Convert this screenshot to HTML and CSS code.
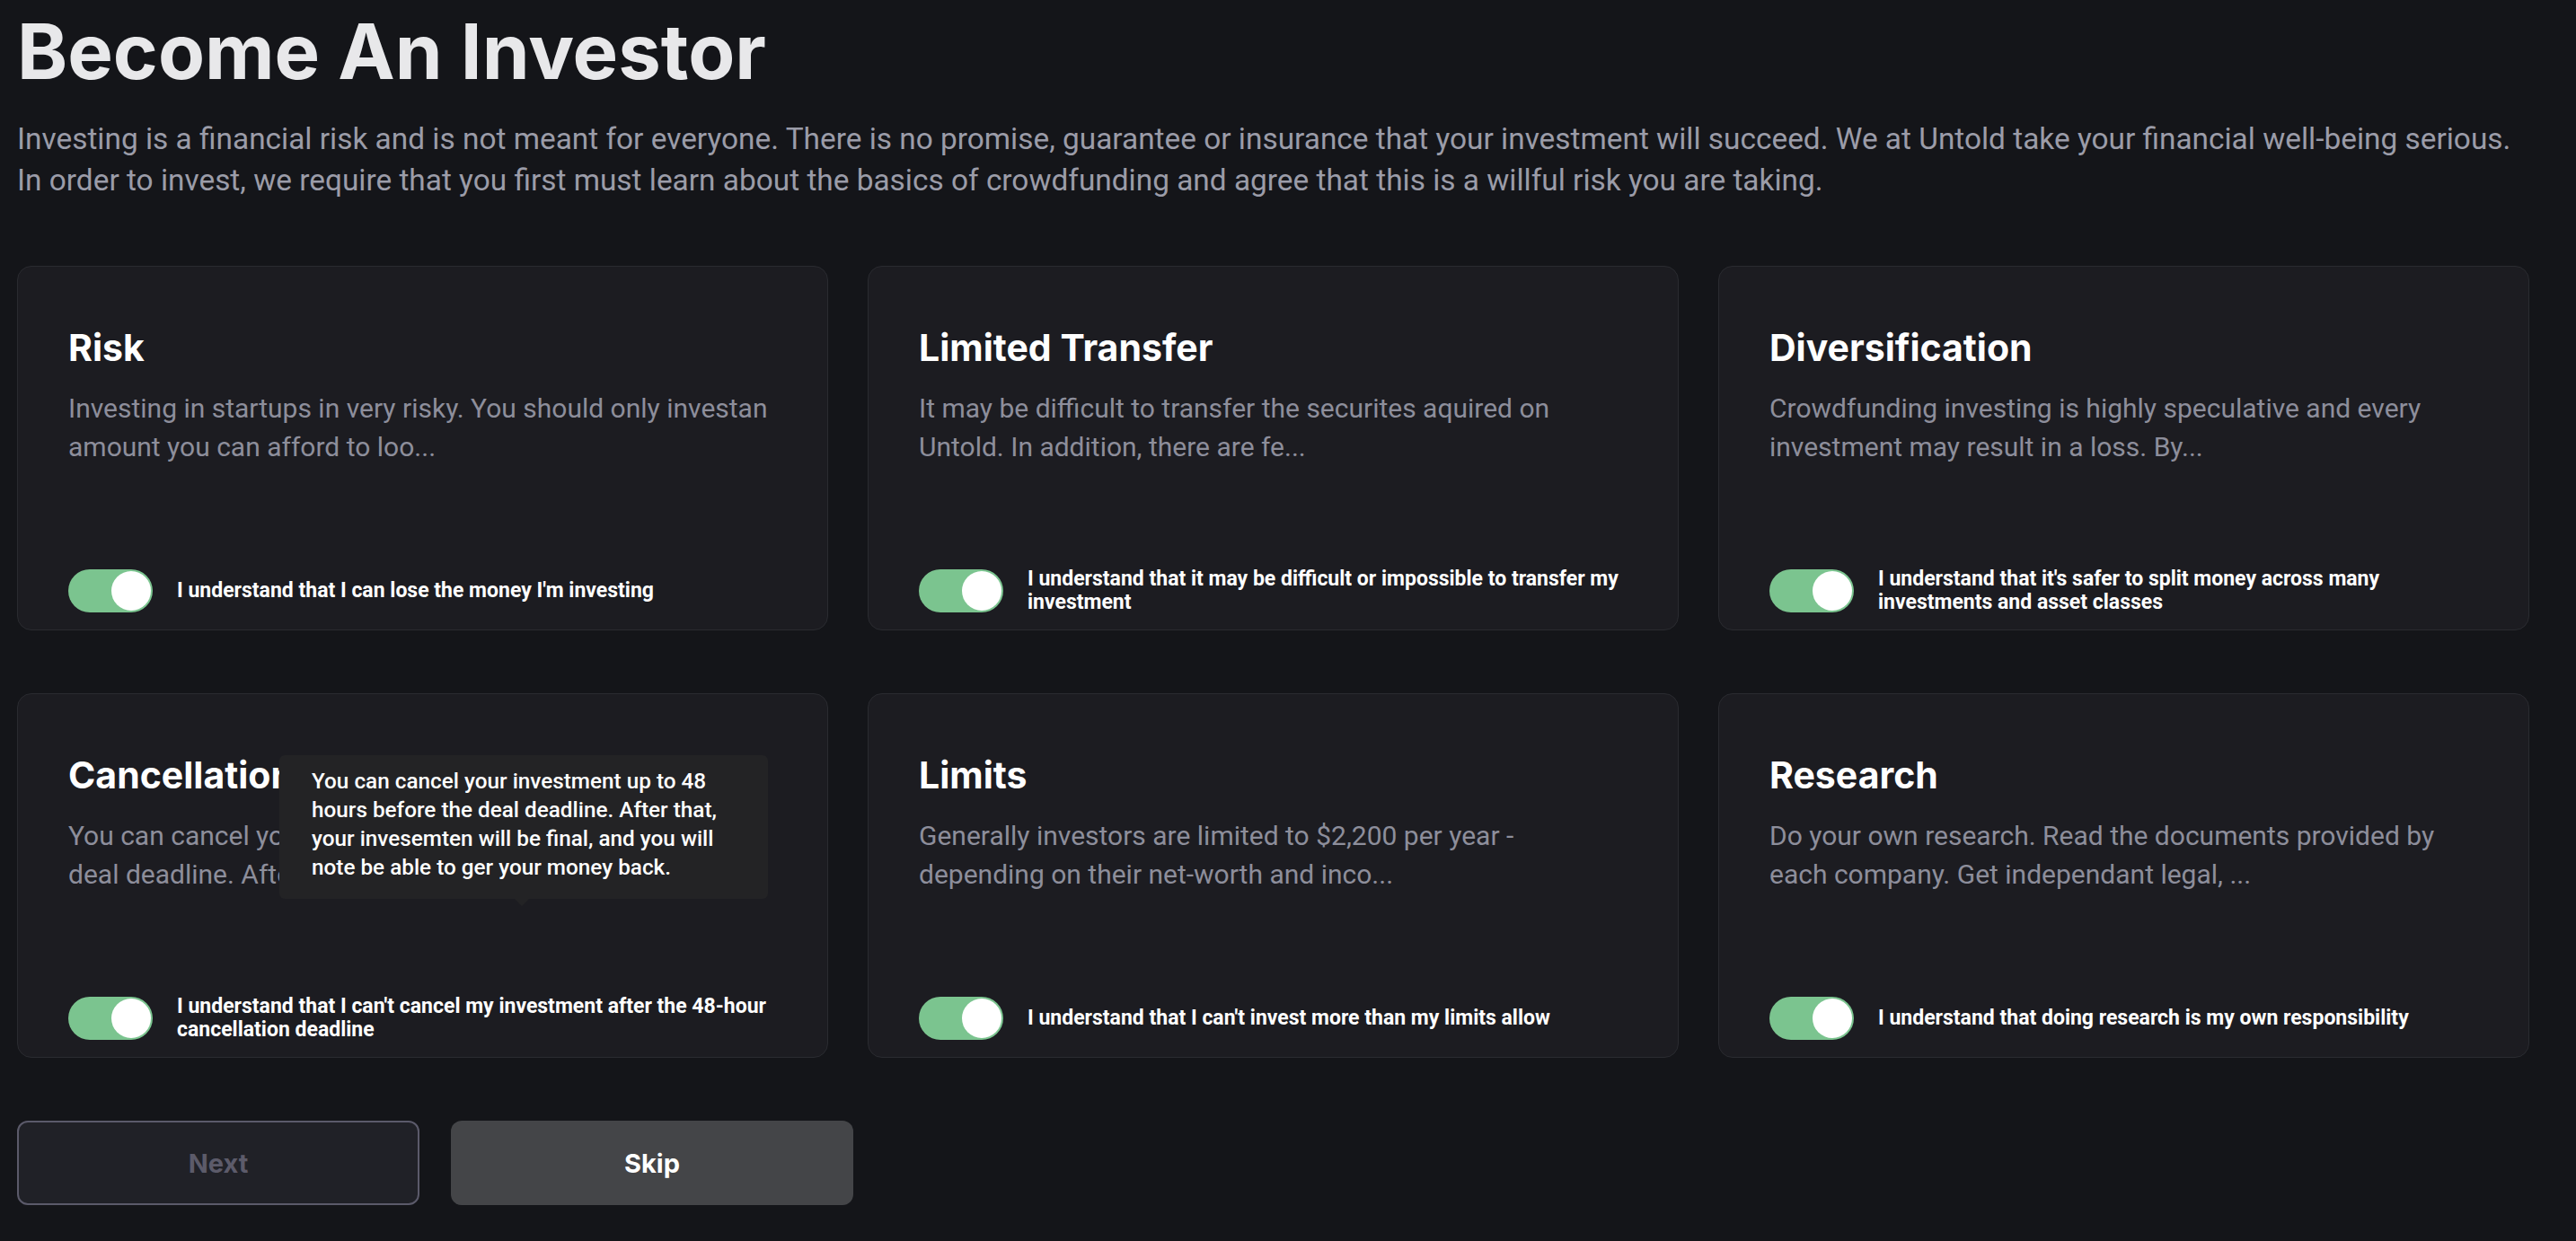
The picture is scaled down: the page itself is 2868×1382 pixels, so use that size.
FILE: index.html
```html
<!DOCTYPE html>
<html lang="en">
  <head>
    <meta charset="UTF-8" />
    <meta name="viewport" content="width=device-width, initial-scale=1.0" />
    <title>Become An Investor</title>
    <link rel="stylesheet" href="styles.css">
  </head>
  <body>
    <main class="page">
      <h1>Become An Investor</h1>
      <p class="intro">
        Investing is a financial risk and is not meant for everyone. There is no promise, guarantee or insurance that your investment will succeed. We at Untold take your financial well-being serious.<br>
        In order to invest, we require that you first must learn about the basics of crowdfunding and agree that this is a willful risk you are taking.
      </p>

      <section class="cards">
        <div class="card">
          <h2>Risk</h2>
          <p>Investing in startups in very risky. You should only investan amount you can afford to loo...</p>
          <label class="agree">
            <span class="switch on"></span>
            <span class="agree-text">I understand that I can lose the money I'm investing</span>
          </label>
        </div>

        <div class="card">
          <h2>Limited Transfer</h2>
          <p>It may be difficult to transfer the securites aquired on Untold. In addition, there are fe...</p>
          <label class="agree">
            <span class="switch on"></span>
            <span class="agree-text">I understand that it may be difficult or impossible to transfer my investment</span>
          </label>
        </div>

        <div class="card">
          <h2>Diversification</h2>
          <p>Crowdfunding investing is highly speculative and every investment may result in a loss. By...</p>
          <label class="agree">
            <span class="switch on"></span>
            <span class="agree-text">I understand that it's safer to split money across many investments and asset classes</span>
          </label>
        </div>

        <div class="card">
          <h2>Cancellation</h2>
          <p>You can cancel your investment up to 48 hours before the deal deadline. After that, your...</p>
          <label class="agree">
            <span class="switch on"></span>
            <span class="agree-text">I understand that I can't cancel my investment after the 48-hour cancellation deadline</span>
          </label>
          <div class="tooltip">You can cancel your investment up to 48 hours before the deal deadline. After that, your invesemten will be final, and you will note be able to ger your money back.</div>
        </div>

        <div class="card">
          <h2>Limits</h2>
          <p>Generally investors are limited to $2,200 per year - depending on their net-worth and inco...</p>
          <label class="agree">
            <span class="switch on"></span>
            <span class="agree-text">I understand that I can't invest more than my limits allow</span>
          </label>
        </div>

        <div class="card">
          <h2>Research</h2>
          <p>Do your own research. Read the documents provided by each company. Get independant legal, ...</p>
          <label class="agree">
            <span class="switch on"></span>
            <span class="agree-text">I understand that doing research is my own responsibility</span>
          </label>
        </div>
      </section>

      <div class="actions">
        <button class="btn btn-next" disabled>Next</button>
        <button class="btn btn-skip">Skip</button>
      </div>
    </main>
  </body>
</html>
```

FILE: styles.css
```css
* {
  box-sizing: border-box;
}

:root {
  --bg: #141519;
  --card-bg: #1c1c21;
  --card-border: #2a2b30;
  --green: #7bc48f;
  --muted: #8d8e9b;
}

body {
  margin: 0;
  background: var(--bg);
  font-family: Roboto, "Liberation Sans", sans-serif;
}

.page {
  padding: 8px 19px 40px;
}

h1 {
  margin: 0;
  font-family: Inter, "Liberation Sans", sans-serif;
  font-size: 85px;
  line-height: 100px;
  font-weight: 700;
  letter-spacing: 0;
  color: #e8e8ea;
}

.intro {
  margin: 24px 0 0;
  font-size: 33.4px;
  line-height: 46px;
  color: #9b9ca8;
}

/* 3 x 2 grid of risk cards */
.cards {
  display: grid;
  grid-template-columns: repeat(3, 903px);
  column-gap: 44px;
  row-gap: 70px;
  margin-top: 72px;
}

.card {
  position: relative;
  height: 406px;
  display: flex;
  flex-direction: column;
  padding: 66px 56px 17px;
  background: var(--card-bg);
  border: 1px solid var(--card-border);
  border-radius: 16px;
}

.card h2 {
  margin: 0;
  font-family: Inter, "Liberation Sans", sans-serif;
  font-size: 41px;
  line-height: 48px;
  font-weight: 700;
  color: #fff;
}

.card p {
  margin: 22px 0 0;
  font-size: 30px;
  line-height: 43px;
  color: var(--muted);
}

/* toggle + label, pushed to the bottom of the card */
.agree {
  margin-top: auto;
  min-height: 52px;
  display: flex;
  align-items: center;
  gap: 27px;
  cursor: pointer;
}

.switch {
  position: relative;
  flex: none;
  width: 94px;
  height: 48px;
  border-radius: 24px;
  background: #3a3b41;
}

.switch::after {
  content: '';
  position: absolute;
  top: 2px;
  left: 2px;
  width: 44px;
  height: 44px;
  border-radius: 50%;
  background: #fff;
}

.switch.on {
  background: var(--green);
}

.switch.on::after {
  left: auto;
  right: 2px;
}

.agree-text {
  font-size: 23px;
  line-height: 26px;
  font-weight: 700;
  color: #fff;
}

.tooltip {
  position: absolute;
  left: 291px;
  top: 68px;
  width: 544px;
  padding: 13px 36px 19px;
  background: #232325;
  border-radius: 6px;
  font-size: 24.3px;
  line-height: 32px;
  font-weight: 500;
  color: #fff;
  z-index: 2;
}

.tooltip::after {
  content: '';
  position: absolute;
  left: 262px;
  bottom: -8px;
  border-left: 8px solid transparent;
  border-right: 8px solid transparent;
  border-top: 8px solid #232325;
}

.actions {
  display: flex;
  gap: 35px;
  margin-top: 70px;
}

.btn {
  width: 448px;
  height: 94px;
  border-radius: 12px;
  font-family: Inter, "Liberation Sans", sans-serif;
  font-size: 29px;
  font-weight: 700;
  cursor: pointer;
}

.btn-next {
  background: #202127;
  border: 2px solid #5b5a6a;
  color: #5c5b6a;
  cursor: default;
}

.btn-skip {
  background: #444548;
  border: none;
  color: #fff;
}
```
